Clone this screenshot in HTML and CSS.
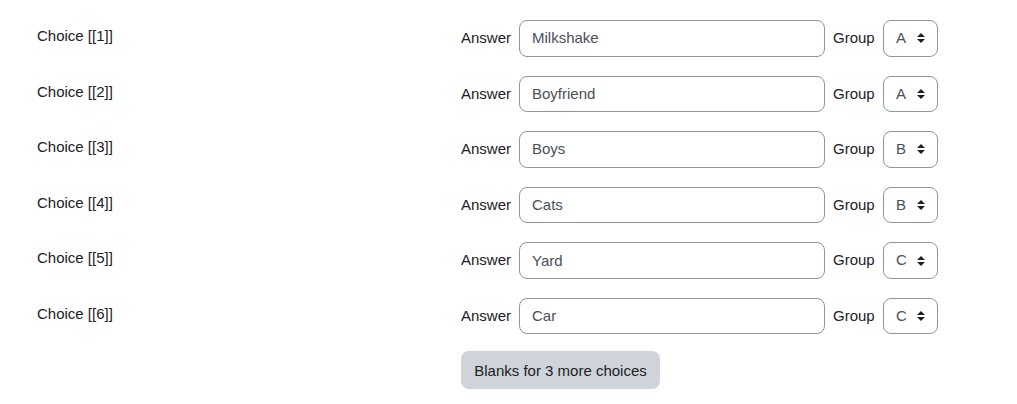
FILE: index.html
```html
<!DOCTYPE html>
<html>
<head>
<meta charset="utf-8">
<link rel="stylesheet" href="styles.css">
</head>
<body>
<div class="form">
  <div class="row">
    <div class="choice">Choice [[1]]</div>
    <div class="fields">
      <span class="lbl answer-lbl">Answer</span>
      <input class="text" type="text" value="Milkshake">
      <span class="lbl group-lbl">Group</span>
      <div class="select"><span>A</span><svg class="arrows" width="8" height="10" viewBox="0 0 8 10"><path d="M4 0L8 4H0z M4 10L0 6H8z" fill="#1d2125"/></svg></div>
    </div>
  </div>
  <div class="row">
    <div class="choice">Choice [[2]]</div>
    <div class="fields">
      <span class="lbl answer-lbl">Answer</span>
      <input class="text" type="text" value="Boyfriend">
      <span class="lbl group-lbl">Group</span>
      <div class="select"><span>A</span><svg class="arrows" width="8" height="10" viewBox="0 0 8 10"><path d="M4 0L8 4H0z M4 10L0 6H8z" fill="#1d2125"/></svg></div>
    </div>
  </div>
  <div class="row">
    <div class="choice">Choice [[3]]</div>
    <div class="fields">
      <span class="lbl answer-lbl">Answer</span>
      <input class="text" type="text" value="Boys">
      <span class="lbl group-lbl">Group</span>
      <div class="select"><span>B</span><svg class="arrows" width="8" height="10" viewBox="0 0 8 10"><path d="M4 0L8 4H0z M4 10L0 6H8z" fill="#1d2125"/></svg></div>
    </div>
  </div>
  <div class="row">
    <div class="choice">Choice [[4]]</div>
    <div class="fields">
      <span class="lbl answer-lbl">Answer</span>
      <input class="text" type="text" value="Cats">
      <span class="lbl group-lbl">Group</span>
      <div class="select"><span>B</span><svg class="arrows" width="8" height="10" viewBox="0 0 8 10"><path d="M4 0L8 4H0z M4 10L0 6H8z" fill="#1d2125"/></svg></div>
    </div>
  </div>
  <div class="row">
    <div class="choice">Choice [[5]]</div>
    <div class="fields">
      <span class="lbl answer-lbl">Answer</span>
      <input class="text" type="text" value="Yard">
      <span class="lbl group-lbl">Group</span>
      <div class="select"><span>C</span><svg class="arrows" width="8" height="10" viewBox="0 0 8 10"><path d="M4 0L8 4H0z M4 10L0 6H8z" fill="#1d2125"/></svg></div>
    </div>
  </div>
  <div class="row">
    <div class="choice">Choice [[6]]</div>
    <div class="fields">
      <span class="lbl answer-lbl">Answer</span>
      <input class="text" type="text" value="Car">
      <span class="lbl group-lbl">Group</span>
      <div class="select"><span>C</span><svg class="arrows" width="8" height="10" viewBox="0 0 8 10"><path d="M4 0L8 4H0z M4 10L0 6H8z" fill="#1d2125"/></svg></div>
    </div>
  </div>
  <div class="row btn-row">
    <div class="choice"></div>
    <div class="fields">
      <button class="btn" type="button">Blanks for 3 more choices</button>
    </div>
  </div>
</div>
</body>
</html>
```
FILE: styles.css
```css
html, body {
  margin: 0;
  padding: 0;
  background: #ffffff;
}
body {
  font-family: "Liberation Sans", Arial, sans-serif;
  font-size: 15px;
  line-height: 22.5px;
  color: #1d2125;
}
.form {
  padding: 20px 0 0 37px;
  display: flex;
  flex-direction: column;
  gap: 19.1px;
}
.row {
  display: flex;
  align-items: flex-start;
  height: 36.5px;
}
.btn-row {
  margin-top: -1.6px;
  height: 37.5px;
}
.choice {
  width: 424px;
  flex: none;
  padding-top: 5px;
}
.fields {
  display: flex;
  align-items: center;
  height: 36.5px;
}
.answer-lbl {
  width: 58px;
}
.group-lbl {
  margin-left: 8px;
  width: 50px;
}
.text {
  box-sizing: border-box;
  width: 306px;
  height: 36.5px;
  border: 1px solid #8f959e;
  border-radius: 8px;
  padding: 5px 12px 6px;
  font-family: inherit;
  font-size: 15px;
  color: #495057;
  background: #fff;
  margin: 0;
  outline: none;
}
.select {
  box-sizing: border-box;
  width: 55px;
  height: 36.5px;
  border: 1px solid #8f959e;
  border-radius: 8px;
  padding: 0 0 0 12px;
  display: flex;
  align-items: center;
  color: #495057;
}
.select span {
  width: 21px;
}
.arrows {
  display: block;
}
.btn {
  box-sizing: border-box;
  height: 37.5px;
  width: 199px;
  border: none;
  border-radius: 8px;
  background: #ced4da;
  color: #1d2125;
  font-family: inherit;
  font-size: 15px;
  padding: 6px 12px;
  margin: 0;
}
```
